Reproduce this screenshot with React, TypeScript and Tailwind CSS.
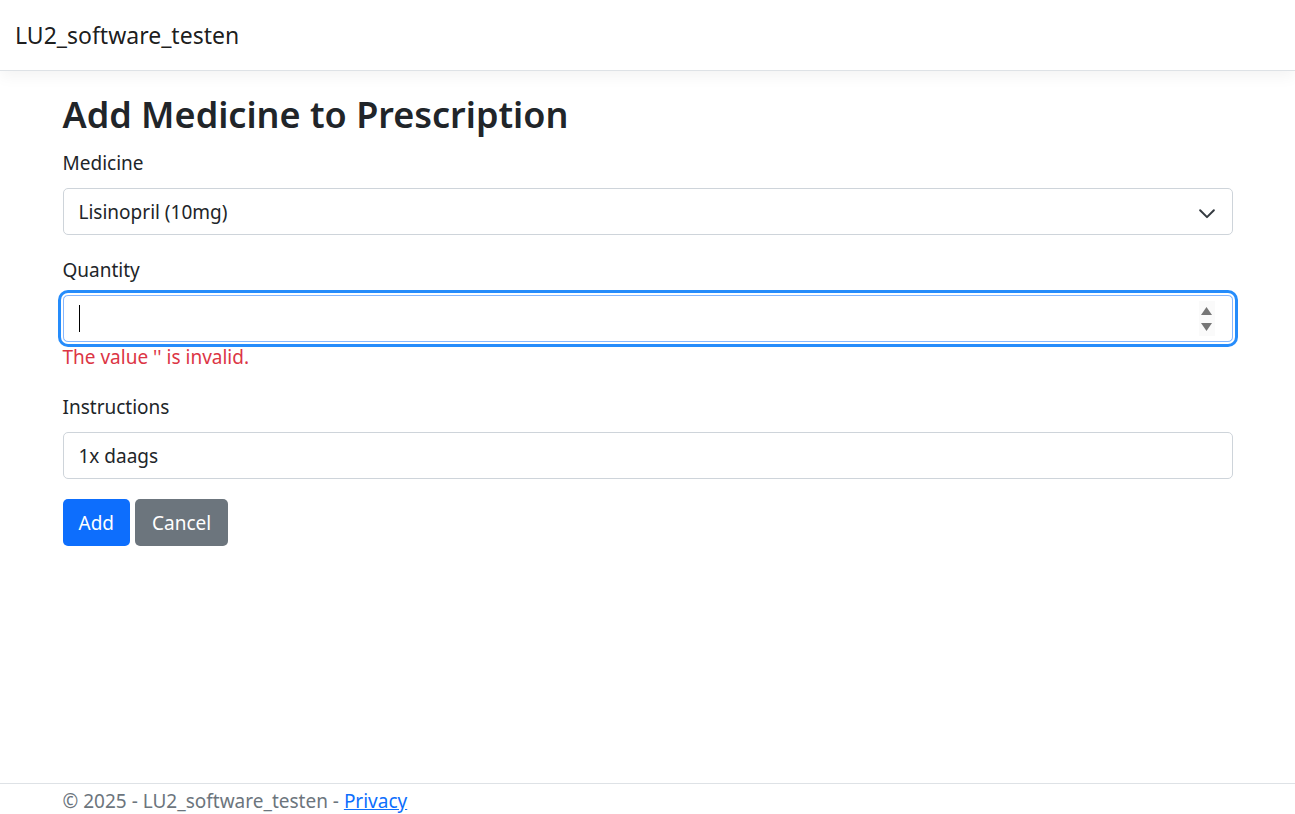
import React from "react";

const font = { fontFamily: '"Noto Sans", "Open Sans", sans-serif' };

function Label({ children }: { children: React.ReactNode }) {
  return <div className="mb-[10px] text-[19px] leading-[30px] text-[#212529]">{children}</div>;
}

export default function App() {
  return (
    <div className="flex h-[814px] flex-col overflow-hidden bg-white text-[#212529]" style={font}>
      <header className="h-[71px] border-b border-[#dee2e6] shadow-[0_5px_15px_rgba(0,0,0,0.05)]">
        <div className="px-[15px] py-[10px]">
          <div className="py-[6px] text-[23px] leading-[38px] text-[rgba(0,0,0,0.9)]">LU2_software_testen</div>
        </div>
      </header>

      <main className="mx-auto mt-[20px] w-[1170px] flex-1">
        <h1 className="mb-[10px] text-[36px] font-semibold leading-[47px]">Add Medicine to Prescription</h1>

        <div className="mb-[20px]">
          <Label>Medicine</Label>
          <div className="flex h-[47px] items-center justify-between rounded-[5px] border border-[#ced4da] pl-[15px] pr-[15px] text-[19px] leading-[30px]">
            <span>Lisinopril (10mg)</span>
            <svg width="20" height="15" viewBox="0 0 16 12" fill="none">
              <path d="m2.5 5 5.5 5.5 5.5-5.5" stroke="#343a40" strokeWidth="1.6" strokeLinecap="round" strokeLinejoin="round" />
            </svg>
          </div>
        </div>

        <div className="mb-[20px]">
          <Label>Quantity</Label>
          <div className="relative flex h-[47px] items-center rounded-[5px] border border-[#86b7fe] pl-[15px] pr-[15px] text-[19px] leading-[30px] shadow-[0_0_0_2px_white,0_0_0_5px_#258cfb]">
            <span className="h-[27px] w-[1px] bg-black" />
            <div className="absolute right-[17px] top-[5px] flex h-[35px] w-[16px] flex-col items-center justify-center gap-[8px] bg-[#fafafa]">
              <svg width="11" height="8" viewBox="0 0 11 8">
                <path d="M5.5 0 L11 8 L0 8 Z" fill="#767676" />
              </svg>
              <svg width="11" height="8" viewBox="0 0 11 8">
                <path d="M0 0 L11 0 L5.5 8 Z" fill="#767676" />
              </svg>
            </div>
          </div>
          <div className="text-[19px] leading-[30px] text-[#dc3545]">The value '' is invalid.</div>
        </div>

        <div className="mb-[20px]">
          <Label>Instructions</Label>
          <div className="flex h-[47px] items-center rounded-[5px] border border-[#ced4da] px-[15px] text-[19px] leading-[30px]">
            1x daags
          </div>
        </div>

        <div className="flex gap-[5px]">
          <button className="h-[47px] rounded-[5px] bg-[#0d6efd] px-[16px] text-[19px] leading-[30px] text-white">Add</button>
          <button className="h-[47px] rounded-[5px] bg-[#6c757d] px-[17px] text-[19px] leading-[30px] text-white">Cancel</button>
        </div>
      </main>

      <footer className="h-[31px] border-t border-[#dee2e6] text-[#6c757d]">
        <div className="mx-auto w-[1170px] pt-[2px] text-[19px] leading-[30px] whitespace-nowrap">
          © 2025 - LU2_software_testen - <a href="#" className="text-[#0d6efd] underline">Privacy</a>
        </div>
      </footer>
    </div>
  );
}
